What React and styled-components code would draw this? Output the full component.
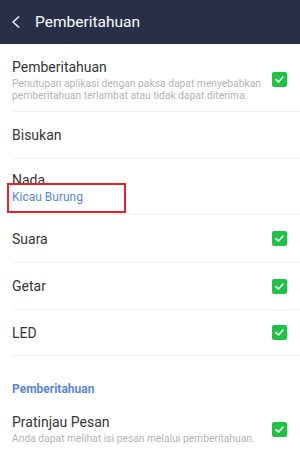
import React from "react";
import styled, { createGlobalStyle } from "styled-components";

const Global = createGlobalStyle`
  body {
    margin: 0;
    background: #ffffff;
    font-family: Roboto, "Liberation Sans", sans-serif;
  }
`;

const Page = styled.div`
  width: 300px;
  height: 456px;
  overflow: hidden;
  background: #ffffff;
`;

const Header = styled.header`
  height: 44px;
  background: #283049;
  display: flex;
  align-items: center;
  padding-left: 12px;
  gap: 15px;
  color: #ffffff;
  font-size: 15.5px;
`;

const Row = styled.div`
  margin-left: 12px;
  padding-right: 13px;
  height: ${(p) => p.h}px;
  padding-top: ${(p) => p.pt || 0}px;
  display: flex;
  align-items: ${(p) => (p.top ? "flex-start" : "center")};
  justify-content: space-between;
  border-bottom: ${(p) => (p.last ? "none" : "1px solid #f0f0f0")};
  box-sizing: border-box;
`;

const TextCol = styled.div`
  display: flex;
  flex-direction: column;
`;

const Title = styled.div`
  font-size: 14px;
  color: #363636;
  line-height: 18px;
`;

const Sub = styled.div`
  font-size: 10.3px;
  color: #b4b4b4;
  line-height: 11.5px;
  margin-top: 2px;
`;

const Value = styled.div`
  font-size: 12px;
  color: #5b86d6;
  line-height: 14px;
`;

const Highlight = styled.div`
  margin: -6px 0 0 -5px;
  padding: 0 0 2px 3px;
  width: 119px;
  height: 30px;
  border: 2px solid #e8202a;
  box-sizing: border-box;
  display: flex;
  align-items: center;
`;

const Section = styled.div`
  margin-left: 12px;
  padding-top: 26px;
  font-size: 12px;
  line-height: 14px;
  font-weight: bold;
  color: #5b86d6;
`;

const Box = styled.div`
  width: 15px;
  height: 15px;
  border-radius: 2px;
  background: #1ec345;
  display: flex;
  align-items: center;
  justify-content: center;
  flex-shrink: 0;
`;

const Check = () => (
  <Box>
    <svg width="11" height="11" viewBox="0 0 11 11">
      <path d="M2 5.6 L4.5 8 L9 3" fill="none" stroke="#fff" strokeWidth="1.6" strokeLinecap="round" strokeLinejoin="round" />
    </svg>
  </Box>
);

export default function App() {
  return (
    <Page>
      <Global />
      <Header>
        <svg width="8" height="12" viewBox="0 0 8 12">
          <path d="M7 0.5 L1 6 L7 11.5" fill="none" stroke="#fff" strokeWidth="1.3" />
        </svg>
        <span>Pemberitahuan</span>
      </Header>
      <Row h={68} pt={4}>
        <TextCol>
          <Title>Pemberitahuan</Title>
          <Sub>
            Penutupan aplikasi dengan paksa dapat menyebabkan
            <br />
            pemberitahuan terlambat atau tidak dapat diterima.
          </Sub>
        </TextCol>
        <Check />
      </Row>
      <Row h={47}>
        <Title>Bisukan</Title>
      </Row>
      <Row h={56} pt={12} top>
        <TextCol>
          <Title>Nada</Title>
          <Highlight>
            <Value>Kicau Burung</Value>
          </Highlight>
        </TextCol>
      </Row>
      <Row h={48}>
        <Title>Suara</Title>
        <Check />
      </Row>
      <Row h={47}>
        <Title>Getar</Title>
        <Check />
      </Row>
      <Row h={46}>
        <Title>LED</Title>
        <Check />
      </Row>
      <Section>Pemberitahuan</Section>
      <Row h={64} pt={2} last>
        <TextCol>
          <Title>Pratinjau Pesan</Title>
          <Sub>Anda dapat melihat isi pesan melalui pemberitahuan.</Sub>
        </TextCol>
        <Check />
      </Row>
    </Page>
  );
}
